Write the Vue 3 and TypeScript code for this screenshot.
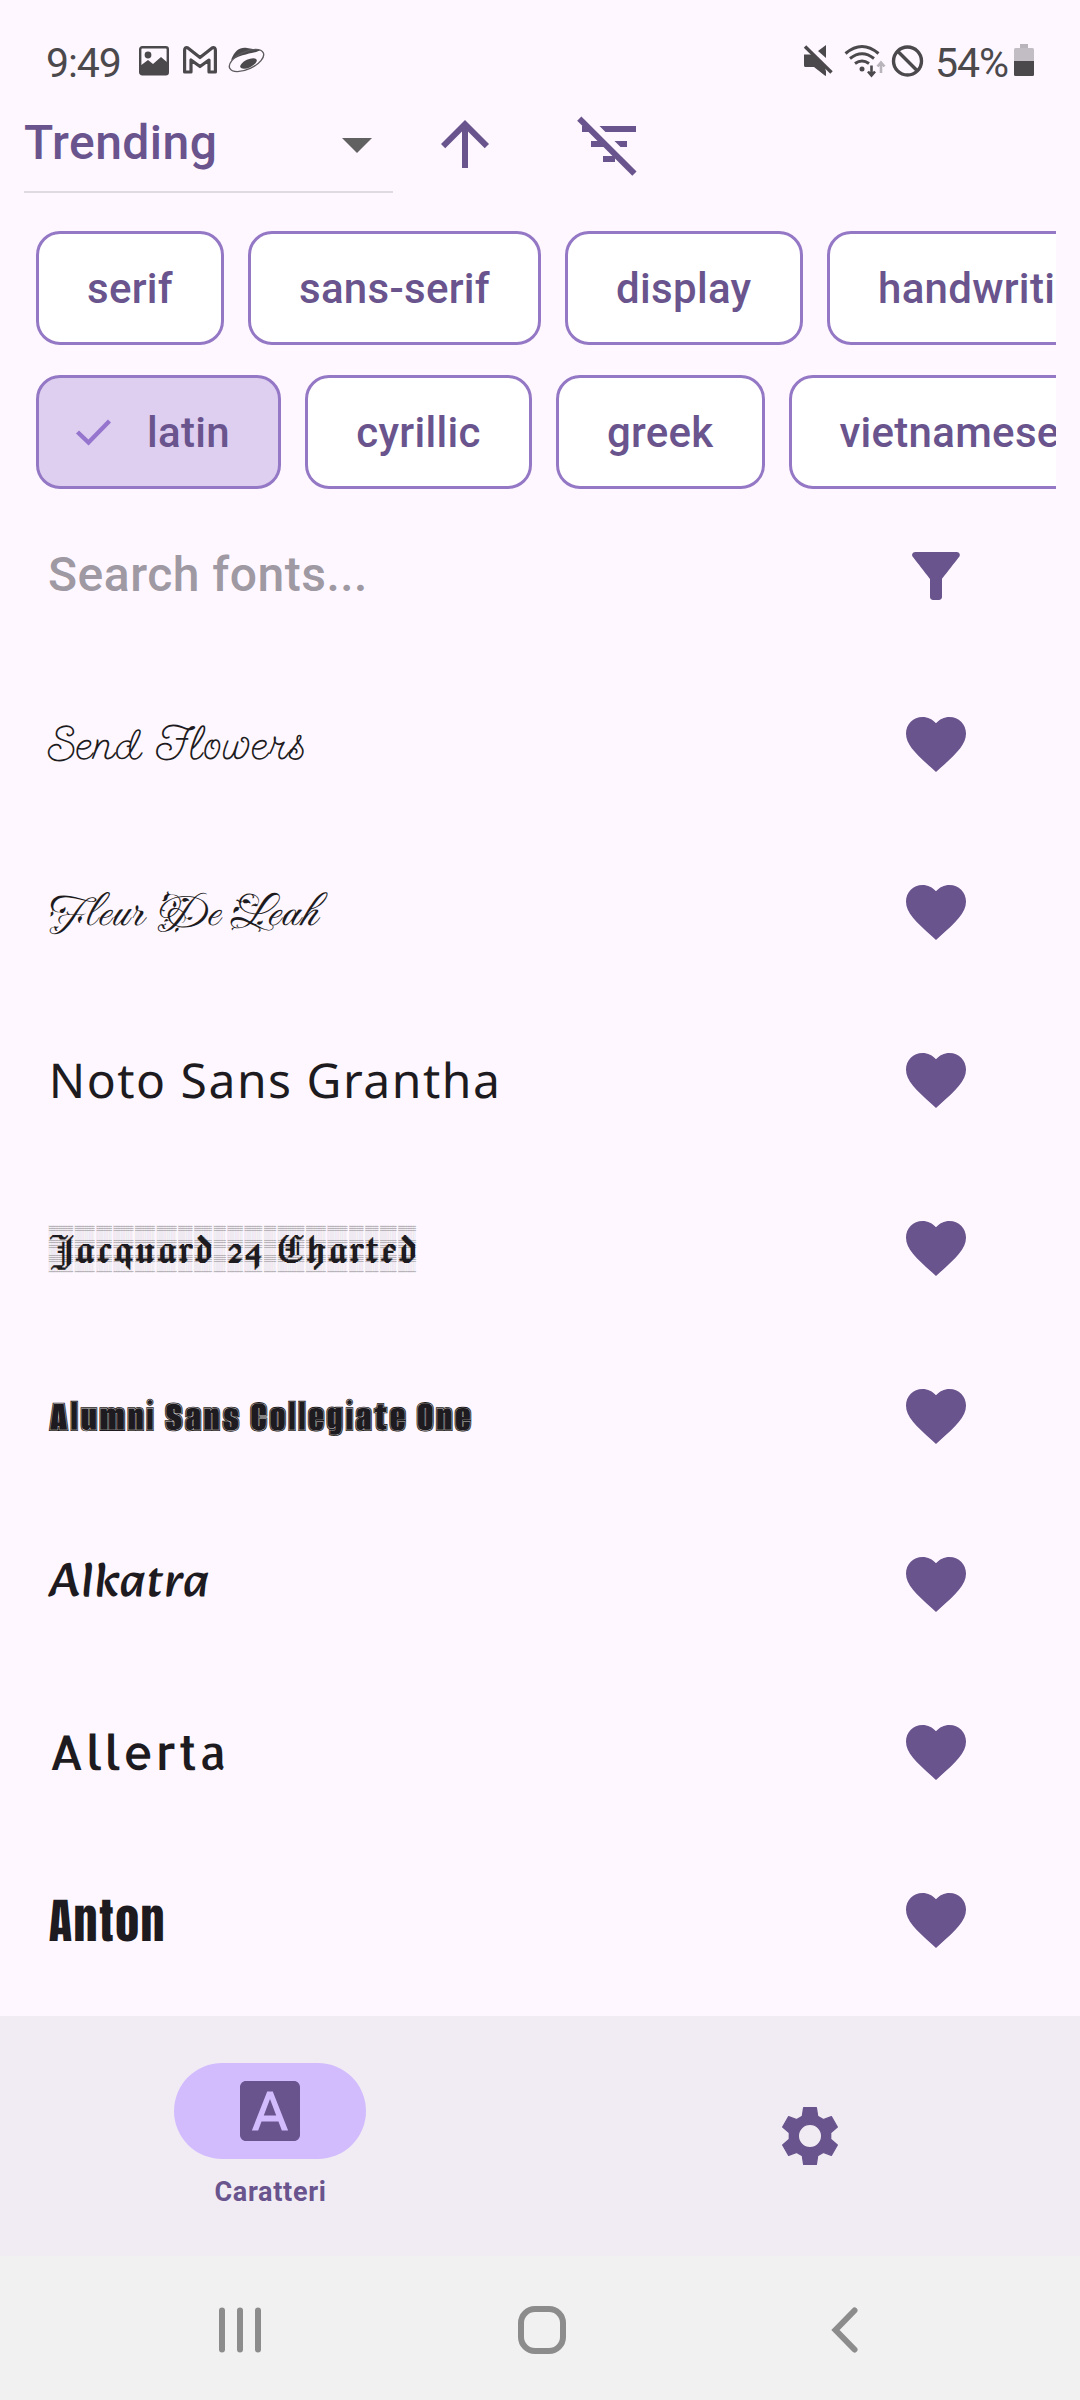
<script setup lang="ts">
interface Chip {
  label: string
  width: number
  selected?: boolean
}

interface FontRow {
  name: string
  css: string
  baseline: number
}

const categories: Chip[] = [
  { label: 'serif', width: 188 },
  { label: 'sans-serif', width: 293 },
  { label: 'display', width: 237.5 },
  { label: 'handwriting', width: 328 },
]

const subsets: Chip[] = [
  { label: 'latin', width: 245, selected: true },
  { label: 'cyrillic', width: 227 },
  { label: 'greek', width: 208.5 },
  { label: 'vietnamese', width: 322 },
]

// Baselines are relative to the top of each 168px row.
const fonts: FontRow[] = [
  { name: 'Send Flowers', css: 'send-flowers', baseline: 99 },
  { name: 'Fleur De Leah', css: 'fleur', baseline: 97 },
  { name: 'Noto Sans Grantha', css: 'grantha', baseline: 102 },
  { name: 'Jacquard 24 Charted', css: 'jacquard', baseline: 99 },
  { name: 'Alumni Sans Collegiate One', css: 'alumni', baseline: 99 },
  { name: 'Alkatra', css: 'alkatra', baseline: 96 },
  { name: 'Allerta', css: 'allerta', baseline: 102 },
  { name: 'Anton', css: 'anton', baseline: 105 },
]
</script>

<template>
  <div class="screen">
    <header class="status">
      <span class="clock">9:49</span>
      <svg class="notif" width="130" height="34" viewBox="0 0 130 34">
        <rect x="1.2" y="4.2" width="27.6" height="27" rx="2" fill="none" stroke="#4b494c" stroke-width="2.4" />
        <path d="M1 23l8-6 5 4 8-7 7 6v9.500a2 2 0 0 1-2 2H3a2 2 0 0 1-2-2z" fill="#4b494c" />
        <circle cx="9" cy="12" r="3.4" fill="#4b494c" />
        <path d="M45.600 29V7.200q0-3 3-2.400L61 14.500l12.400-9.700q3-.600 3 2.400V29H70V17L61 23.500 52 17V29z" fill="none" stroke="#4b494c" stroke-width="3.200" stroke-linejoin="round" />
        <g fill="#4b494c">
          <path d="M92 17C96 7 101 4 108 5l13 2C119 10 108 9 92 17z" />
          <ellipse cx="109.500" cy="20.500" rx="9" ry="4" transform="rotate(-25 109.500 20.500)" />
        </g>
        <ellipse cx="107.500" cy="17.500" rx="18.500" ry="8.800" transform="rotate(-25 107.500 17.500)" fill="none" stroke="#5d5b5e" stroke-width="1.400" />
      </svg>
      <svg class="signals" width="122" height="36" viewBox="0 0 122 36">
        <path d="M1 12h8l3.500-1L23 22v11L12 24H3a2 2 0 0 1-2-2zM23 2v13l-8-7z" fill="#4b494c" />
        <path d="M3 3.500L28.500 29.500" stroke="#fef7ff" stroke-width="6" />
        <path d="M1 11.500h9L22.500 24v9L11 24H3a2 2 0 0 1-2-2z" fill="#4b494c" />
        <path d="M2 3.500L28.500 29.500" stroke="#4b494c" stroke-width="3.400" />
        <circle cx="59" cy="26" r="2.500" fill="#4b494c" />
        <g fill="none" stroke="#4b494c" stroke-width="3">
          <path d="M42.500 10.500Q59-3.500 75.500 10.500M47 15.500q12-9.500 24 0M52 20.500q7-5 14 0" />
          <path d="M68.500 22.500v10M65 28.500l3.500 4 3.500-4" stroke-width="2.600" />
          <path d="M78 30V20M74.500 23.500l3.500-4 3.500 4" stroke="#b9b4bb" stroke-width="2.600" />
          <circle cx="104.500" cy="18" r="14" stroke-width="3.400" />
          <path d="M94.500 8l20 20" stroke-width="3.400" />
        </g>
      </svg>
      <span class="percent">54%</span>
      <svg class="battery" width="20" height="34" viewBox="0 0 20 34">
        <path d="M6 1h8v5H6z" fill="#b9b3bb" />
        <rect y="5" width="20" height="27.500" rx="1.500" fill="#c2bcc4" />
        <path d="M0 18h20v13.500a1.500 1.500 0 0 1-1.500 1.500h-17A1.500 1.500 0 0 1 0 31.500z" fill="#4b494c" />
      </svg>
    </header>

    <section class="toolbar">
      <div class="sort">
        <span class="sort-label">Trending</span>
        <svg width="72" height="72" viewBox="0 0 24 24"><path d="M7 10l5 5 5-5z" fill="#616161" /></svg>
      </div>
      <svg class="icon up" viewBox="0 0 24 24"><path d="M4 12l1.410 1.410L11 7.830V20h2V7.830l5.580 5.590L20 12l-8-8-8 8z" /></svg>
      <svg class="icon off" viewBox="0 0 24 24"><path d="M10.830 8H21V6H8.830l2 2zm5 5H18v-2h-4.170l2 2zM14 16.830V18h-4v-2h3.170l-3-3H6v-2h2.170l-3-3H3V6h.170L1.390 4.220 2.800 2.810l18.380 18.380-1.410 1.410L14 16.830z" /></svg>
    </section>

    <section class="chips">
      <div v-for="(row, r) in [categories, subsets]" :key="r" class="chip-row">
        <div
          v-for="chip in row"
          :key="chip.label"
          class="chip"
          :class="{ selected: chip.selected }"
          :style="{ width: chip.width + 'px' }"
        >
          <svg v-if="chip.selected" class="check" width="36" height="28" viewBox="0 0 36 28">
            <path d="M2.500 14L13.500 24.500 34.500 3" fill="none" stroke="#9575cd" stroke-width="4.400" />
          </svg>
          <span>{{ chip.label }}</span>
        </div>
      </div>
    </section>

    <section class="search">
      <span>Search fonts...</span>
      <svg class="icon" viewBox="0 0 24 24"><path d="M4.250 5.610C6.270 8.200 10 13 10 13v6c0 .550.450 1 1 1h2c.550 0 1-.450 1-1v-6s3.720-4.800 5.740-7.390c.510-.660.040-1.610-.790-1.610H5.040c-.830 0-1.300.950-.790 1.610z" /></svg>
    </section>

    <ul class="fonts">
      <li v-for="font in fonts" :key="font.name">
        <svg class="sample" width="700" height="168" viewBox="0 0 700 168">
          <text :class="font.css" x="48.75" :y="font.baseline">{{ font.name }}</text>
        </svg>
        <svg class="icon" viewBox="0 0 24 24"><path d="M12 21.350l-1.450-1.320C5.400 15.360 2 12.280 2 8.500 2 5.420 4.420 3 7.500 3c1.740 0 3.410.810 4.500 2.090C13.090 3.810 14.760 3 16.500 3 19.580 3 22 5.420 22 8.500c0 3.780-3.400 6.860-8.550 11.540L12 21.350z" /></svg>
      </li>
    </ul>

    <nav class="tabs">
      <div class="tab active">
        <div class="pill">
          <svg class="icon" viewBox="0 0 24 24"><path d="M9.930 13.500h4.140L12 7.980zM20 2H4c-1.100 0-2 .900-2 2v16c0 1.100.900 2 2 2h16c1.100 0 2-.900 2-2V4c0-1.100-.900-2-2-2zm-4.050 16.500l-1.140-3H9.170l-1.120 3H5.960l5.110-13h1.860l5.110 13h-2.090z" /></svg>
        </div>
        <span>Caratteri</span>
      </div>
      <div class="tab">
        <svg width="60" height="60" viewBox="240 318 180 180">
          <path
            fill="#69548d"
            fill-rule="evenodd"
            stroke="#69548d"
            stroke-width="4"
            stroke-linejoin="round"
            d="M311 323h38l4 26 17 10 24-9 18 31-20 17v20l20 17-18 31-24-9-17 10-4 26h-38l-4-26-17-10-24 9-18-31 20-17v-20l-20-17 18-31 24 9 17-10zM330 373a35 35 0 1 0 0 70 35 35 0 1 0 0-70z"
          />
        </svg>
      </div>
    </nav>

    <footer class="system">
      <svg width="360" height="144" viewBox="0 0 360 144"><path d="M222 54.500v39M240 54.500v39M258 54.500v39" /></svg>
      <svg width="360" height="144" viewBox="0 0 360 144"><rect x="161" y="53" width="42" height="42" rx="14" /></svg>
      <svg width="360" height="144" viewBox="0 0 360 144"><path d="M134.500 54.500L115.500 74l19 19.500" stroke-linejoin="miter" /></svg>
    </footer>
  </div>
</template>

<style>
body {
  background: #fef7ff;
}
</style>

<style scoped>
.screen {
  display: flex;
  flex-direction: column;
  width: 1080px;
  height: 2400px;
  overflow: hidden;
  background: #fef7ff;
  font-family: Roboto, 'Liberation Sans', sans-serif;
  color: #69548d;
}
svg {
  display: block;
  flex: none;
}
.icon {
  width: 72px;
  height: 72px;
  fill: #69548d;
}
.status {
  display: flex;
  align-items: flex-start;
  box-sizing: border-box;
  height: 108px;
  padding: 43px 46px 0 46px;
  color: #4b494c;
  font-size: 41px;
  line-height: 40px;
  letter-spacing: -1.1px;
}
.clock {
  width: 93px;
}
.percent {
  width: 79px;
}
.signals {
  margin-left: auto;
  margin-right: 10px;
}
.toolbar {
  display: flex;
  height: 123px;
  padding-left: 24px;
}
.sort {
  display: flex;
  justify-content: space-between;
  box-sizing: border-box;
  width: 369px;
  height: 85px;
  border-bottom: 2px solid #dfd9e1;
}
.sort-label {
  font-size: 48px;
  font-weight: 500;
  line-height: 69px;
  letter-spacing: 0.45px;
}
.up {
  margin-left: 36px;
}
.off {
  margin-left: 72px;
}
.chips {
  display: flex;
  flex-direction: column;
  gap: 30px;
  margin: 0 24px;
  padding-left: 12px;
  overflow: hidden;
}
.chip-row {
  display: flex;
  gap: 24px;
}
.chip {
  display: flex;
  flex: none;
  align-items: center;
  justify-content: center;
  box-sizing: border-box;
  height: 114px;
  border: 3px solid #9478c5;
  border-radius: 24px;
  background: #fff;
  font-size: 42px;
  font-weight: 500;
  letter-spacing: 0.3px;
  line-height: 50px;
}
.chip span {
  padding-top: 2px;
}
.selected {
  justify-content: flex-start;
  padding-left: 36px;
  background: #decff0;
}
.check {
  margin-right: 36px;
}
.search {
  display: flex;
  align-items: center;
  justify-content: space-between;
  height: 72px;
  margin-top: 51px;
  padding: 0 108px 0 48px;
  color: #9f99a3;
  font-size: 48px;
  font-weight: 500;
  letter-spacing: 0.5px;
}
.search span {
  padding-bottom: 3px;
}
.fonts {
  margin: 48px 0 0;
  padding: 0;
  list-style: none;
}
.fonts li {
  display: flex;
  align-items: center;
  justify-content: space-between;
  height: 168px;
  padding-right: 108px;
}
.sample text {
  fill: #1d1b20;
  font-size: 48px;
  letter-spacing: 1.5px;
  text-rendering: geometricPrecision;
}
.send-flowers {
  font-family: 'Send Flowers', 'Liberation Serif', cursive;
}
.fleur {
  font-family: 'Fleur De Leah', 'Liberation Serif', cursive;
}
.grantha {
  font-family: 'Noto Sans Grantha', 'Noto Sans', sans-serif;
}
.jacquard {
  font-family: 'Jacquard 24 Charted', 'Liberation Serif', serif;
}
.alumni {
  font-family: 'Alumni Sans Collegiate One', Roboto, sans-serif;
}
.alkatra {
  font-family: Alkatra, 'Open Sans', sans-serif;
}
.allerta {
  font-family: Allerta, 'Noto Sans', sans-serif;
}
.anton {
  font-family: Anton, Roboto, sans-serif;
}
.tabs {
  display: flex;
  height: 240px;
  margin-top: auto;
  background: #f1ecf4;
}
.tab {
  display: flex;
  align-items: center;
  justify-content: center;
  width: 540px;
}
.active {
  flex-direction: column;
  justify-content: flex-start;
  box-sizing: border-box;
  padding-top: 47px;
  font-size: 27px;
  font-weight: 700;
  line-height: 32px;
  letter-spacing: 0.7px;
}
.active span {
  margin-top: 17px;
  padding-left: 1px;
}
.pill {
  display: flex;
  align-items: center;
  justify-content: center;
  width: 192px;
  height: 96px;
  border-radius: 48px;
  background: #d2bcfd;
}
.system {
  display: flex;
  height: 144px;
  background: #f1f1f1;
}
.system svg {
  fill: none;
  stroke: #8c8c8c;
  stroke-width: 6;
  stroke-linecap: round;
}
</style>
